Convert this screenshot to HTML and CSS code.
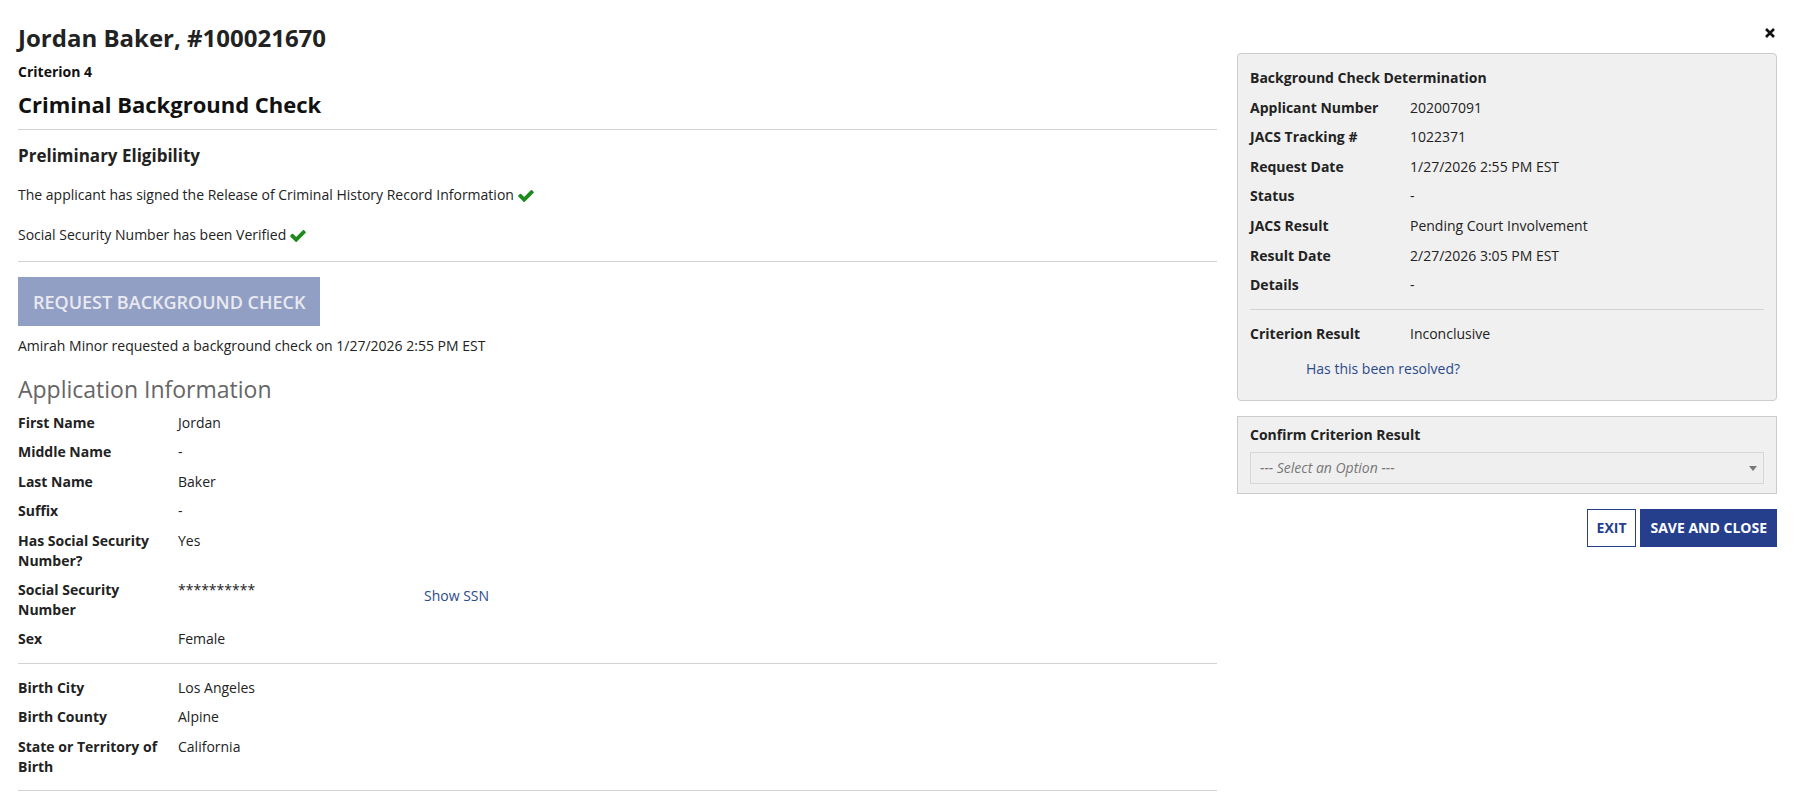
FILE: index.html
```html
<!DOCTYPE html>
<html lang="en">
<head>
    <meta charset="UTF-8">
    <title>Criminal Background Check</title>
    <link rel="stylesheet" href="styles.css">
</head>
<body>

<div class="page">
    <main class="main">
        <h1 class="applicant">Jordan Baker, #100021670</h1>
        <div class="criterion">Criterion 4</div>
        <h2 class="check-title">Criminal Background Check</h2>
        <hr class="rule rule-head">

        <h3 class="section-title">Preliminary Eligibility</h3>
        <p class="check-line">The applicant has signed the Release of Criminal History Record Information <svg class="ok" viewBox="121 334 1550 1188"><path d="M1671 566q0 40-28 68l-724 724-136 136q-28 28-68 28t-68-28l-136-136-362-362q-28-28-28-68t28-68l136-136q28-28 68-28t68 28l294 295 656-657q28-28 68-28t68 28l136 136q28 28 28 68z"/></svg></p>
        <p class="check-line check-last">Social Security Number has been Verified <svg class="ok" viewBox="121 334 1550 1188"><path d="M1671 566q0 40-28 68l-724 724-136 136q-28 28-68 28t-68-28l-136-136-362-362q-28-28-28-68t28-68l136-136q28-28 68-28t68 28l294 295 656-657q28-28 68-28t68 28l136 136q28 28 28 68z"/></svg></p>
        <hr class="rule rule-checks">

        <button class="btn btn-request" disabled>Request Background Check</button>
        <p class="requested">Amirah Minor requested a background check on 1/27/2026 2:55 PM EST</p>

        <h2 class="info-title">Application Information</h2>
        <dl class="details">
            <div class="row"><dt>First Name</dt><dd>Jordan</dd></div>
            <div class="row"><dt>Middle Name</dt><dd>-</dd></div>
            <div class="row"><dt>Last Name</dt><dd>Baker</dd></div>
            <div class="row"><dt>Suffix</dt><dd>-</dd></div>
            <div class="row"><dt>Has Social Security Number?</dt><dd>Yes</dd></div>
            <div class="row"><dt>Social Security Number</dt><dd>**********</dd><a href="#" class="link-btn">Show SSN</a></div>
            <div class="row"><dt>Sex</dt><dd>Female</dd></div>
        </dl>
        <hr class="rule rule-dl">
        <dl class="details">
            <div class="row"><dt>Birth City</dt><dd>Los Angeles</dd></div>
            <div class="row"><dt>Birth County</dt><dd>Alpine</dd></div>
            <div class="row"><dt>State or Territory of Birth</dt><dd>California</dd></div>
        </dl>
        <hr class="rule rule-dl">
    </main>

    <aside class="side">
        <button class="close" title="Close">
            <svg viewBox="0 0 10 10"><path d="M1 1L9 9M9 1L1 9"/></svg>
        </button>

        <section class="panel">
            <div class="panel-title">Background Check Determination</div>
            <dl class="details">
                <div class="row"><dt>Applicant Number</dt><dd>202007091</dd></div>
                <div class="row"><dt>JACS Tracking #</dt><dd>1022371</dd></div>
                <div class="row"><dt>Request Date</dt><dd>1/27/2026 2:55 PM EST</dd></div>
                <div class="row"><dt>Status</dt><dd>-</dd></div>
                <div class="row"><dt>JACS Result</dt><dd>Pending Court Involvement</dd></div>
                <div class="row"><dt>Result Date</dt><dd>2/27/2026 3:05 PM EST</dd></div>
                <div class="row"><dt>Details</dt><dd>-</dd></div>
            </dl>
            <hr class="rule rule-dl">
            <dl class="details">
                <div class="row"><dt>Criterion Result</dt><dd>Inconclusive</dd></div>
            </dl>
            <a href="#" class="link-btn resolved">Has this been resolved?</a>
        </section>

        <section class="confirm">
            <label class="confirm-label" for="criterionResult">Confirm Criterion Result</label>
            <div class="select-wrap">
                <select id="criterionResult" class="select">
                    <option>--- Select an Option ---</option>
                    <option>Eligible</option>
                    <option>Ineligible</option>
                    <option>Inconclusive</option>
                </select>
            </div>
        </section>

        <div class="actions">
            <button class="btn btn-outline">Exit</button>
            <button class="btn btn-primary">Save and Close</button>
        </div>
    </aside>
</div>

</body>
</html>
```

FILE: styles.css
```css
body {
    margin: 0;
    font-family: "Open Sans", Arial, sans-serif;
    font-size: 14px;
    line-height: 1.4;
    color: #222222;
    background-color: #ffffff;
}
.page {
    display: grid;
    grid-template-columns: 1fr 540px;
    column-gap: 20px;
    padding: 24px 21px 0 18px;
}

/* left column */
.applicant {
    margin: 0;
    font-size: 24px;
    line-height: 1.2;
    font-weight: 700;
    color: #222222;
}
.criterion {
    margin-top: 9px;
    font-weight: 700;
    color: #111111;
}
.check-title {
    margin: 10px 0 0;
    font-size: 22px;
    line-height: 1.2;
    font-weight: 700;
    color: #111111;
}
.rule {
    border: none;
    border-top: 1px solid #d3d3d3;
    margin: 0;
}
.rule-head {
    margin: 11px 0 16px;
}
.rule-checks {
    margin: 17px 0 15px;
}
.rule-dl {
    margin: 14px 0 14px;
}
.section-title {
    margin: 0 0 19px;
    font-size: 17px;
    line-height: 1.2;
    font-weight: 700;
}
.check-line {
    margin: 0 0 20px;
}
.check-line.check-last {
    margin-bottom: 0;
}
.ok {
    width: 16px;
    height: 12px;
    vertical-align: -2px;
    fill: #1d8a1d;
}
.btn {
    font-family: inherit;
    font-weight: 700;
    text-transform: uppercase;
    border: 1px solid #263f8c;
    border-radius: 0;
    cursor: pointer;
}
.btn-request {
    display: block;
    height: 49px;
    padding: 0 14px;
    font-size: 18px;
    font-weight: 600;
    background-color: #929fc5;
    border-color: #929fc5;
    color: #e9eaf0;
    cursor: default;
}
.requested {
    margin: 10px 0 0;
}
.info-title {
    margin: 20px 0 9px;
    font-size: 23px;
    line-height: 1.2;
    font-weight: 400;
    color: #666666;
}
.details {
    margin: 0;
}
.row {
    display: grid;
    grid-template-columns: 160px 246px auto;
    align-items: start;
    margin-bottom: 10px;
}
.row dt {
    font-weight: 700;
    padding-right: 15px;
}
.row dd {
    margin: 0;
}
.link-btn {
    color: #2b4a8c;
    text-decoration: none;
    padding-top: 6px;
    justify-self: start;
}

/* right column */
.close {
    display: block;
    margin: 4px 2px 0 auto;
    padding: 0;
    border: none;
    background: none;
    cursor: pointer;
    width: 10px;
    height: 10px;
}
.close svg {
    display: block;
    width: 10px;
    height: 10px;
    stroke: #111111;
    stroke-width: 2.6;
}
.panel {
    margin-top: 15px;
    padding: 14px 12px 21px;
    background-color: #f0f0f0;
    border: 1px solid #cccccc;
    border-radius: 4px;
}
.panel-title {
    font-weight: 700;
    margin-bottom: 10px;
}
.panel .row {
    grid-template-columns: 160px auto;
}
.resolved {
    display: inline-block;
    margin-left: 56px;
    padding: 6px 0 0;
}
.confirm {
    margin-top: 15px;
    padding: 8px 12px 9px;
    background-color: #f0f0f0;
    border: 1px solid #cccccc;
}
.confirm-label {
    display: block;
    font-weight: 700;
    margin-bottom: 7px;
}
.select-wrap {
    position: relative;
}
.select-wrap::after {
    content: "";
    position: absolute;
    right: 7px;
    top: 14px;
    border-left: 4px solid transparent;
    border-right: 4px solid transparent;
    border-top: 5px solid #777777;
}
.select {
    display: block;
    width: 100%;
    height: 32px;
    padding: 0 9px;
    font-family: inherit;
    font-size: 14px;
    font-style: italic;
    color: #777777;
    background-color: #efefef;
    border: 1px solid #d6d6d6;
    border-radius: 0;
    appearance: none;
    -webkit-appearance: none;
}
.actions {
    display: flex;
    justify-content: flex-end;
    gap: 4px;
    margin-top: 15px;
}
.actions .btn {
    height: 38px;
    padding: 0 9px;
    font-size: 14px;
}
.btn-outline {
    background-color: #ffffff;
    color: #263f8c;
}
.btn-primary {
    background-color: #263f8c;
    color: #ffffff;
}
```
